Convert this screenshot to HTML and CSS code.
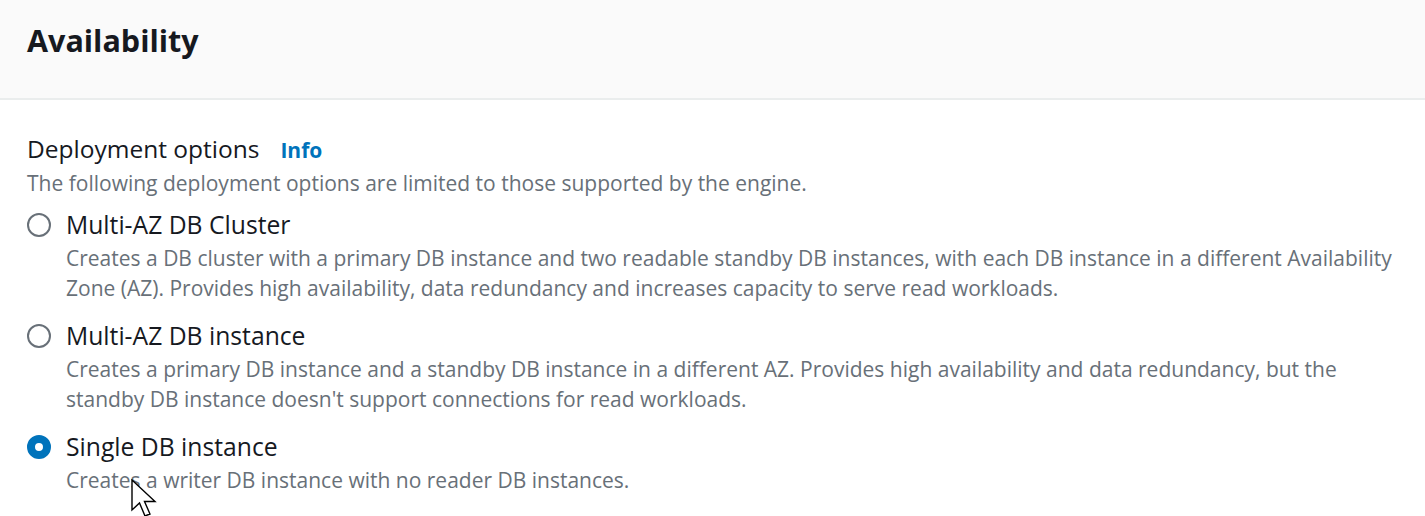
FILE: index.html
```html
<!DOCTYPE html>
<html lang="en">
<head>
<meta charset="utf-8">
<title>Availability</title>
<link rel="stylesheet" href="styles.css">
</head>
<body>
<div class="panel">
  <header class="panel-header">
    <h2 class="panel-title">Availability</h2>
  </header>
  <div class="panel-body">
    <div class="field-label">
      <span class="label-text">Deployment options</span>
      <a class="info-link" href="#">Info</a>
    </div>
    <p class="field-desc">The following deployment options are limited to those supported by the engine.</p>
    <div class="options">
      <label class="option">
        <span class="radio"></span>
        <span class="option-text">
          <span class="option-label">Multi-AZ DB Cluster</span>
          <span class="option-desc">Creates a DB cluster with a primary DB instance and two readable standby DB instances, with each DB instance in a different Availability Zone (AZ). Provides high availability, data redundancy and increases capacity to serve read workloads.</span>
        </span>
      </label>
      <label class="option">
        <span class="radio"></span>
        <span class="option-text">
          <span class="option-label">Multi-AZ DB instance</span>
          <span class="option-desc">Creates a primary DB instance and a standby DB instance in a different AZ. Provides high availability and data redundancy, but the standby DB instance doesn't support connections for read workloads.</span>
        </span>
      </label>
      <label class="option">
        <span class="radio checked"></span>
        <span class="option-text">
          <span class="option-label">Single DB instance</span>
          <span class="option-desc">Creates a writer DB instance with no reader DB instances.</span>
        </span>
      </label>
    </div>
  </div>
</div>
<svg class="cursor" width="28" height="40" viewBox="0 0 28 40" aria-hidden="true">
  <path d="M1 1 L1 31 L8.5 24 L14 37 L19 35 L13.5 22.5 L24 22.5 Z" fill="#fff" stroke="#000" stroke-width="1.4" stroke-linejoin="miter"/>
</svg>
</body>
</html>
```
FILE: styles.css
```css
* { box-sizing: border-box; }
html, body { margin: 0; padding: 0; background: #ffffff; }
body {
  font-family: "Open Sans", "Liberation Sans", sans-serif;
  color: #16191f;
  position: relative;
  height: 516px;
  overflow: hidden;
}
.panel-header {
  background: #fafafa;
  height: 100px;
  border-bottom: 2px solid #eaeded;
  padding: 19px 27px 0;
}
.panel-title {
  margin: 0;
  font-size: 30.5px;
  font-weight: 700;
  line-height: 42px;
  color: #16191f;
}
.panel-body {
  padding: 33px 27px 0;
}
.field-label {
  display: flex;
  align-items: baseline;
  gap: 21px;
  height: 32px;
  line-height: 32px;
}
.label-text { font-size: 24.5px; }
.info-link {
  font-size: 21px;
  font-weight: 700;
  color: #0073bb;
  text-decoration: none;
}
.field-desc {
  margin: 3px 0 0;
  font-size: 21px;
  line-height: 30px;
  color: #687078;
}
.options {
  display: flex;
  flex-direction: column;
  gap: 17px;
  margin-top: 11px;
}
.option {
  display: flex;
  gap: 15px;
  align-items: flex-start;
}
.radio {
  flex: 0 0 24px;
  width: 24px;
  height: 24px;
  border-radius: 50%;
  border: 2px solid #687078;
  margin-top: 4px;
  background: #fff;
}
.radio.checked {
  border: 8px solid #0073bb;
  background: #fff;
}
.option-text {
  display: flex;
  flex-direction: column;
}
.option-label {
  font-size: 24.7px;
  line-height: 32px;
  color: #16191f;
}
.option-desc {
  margin-top: 2px;
  font-size: 21px;
  line-height: 30px;
  color: #687078;
}
.cursor {
  position: absolute;
  left: 131px;
  top: 479px;
}
```
